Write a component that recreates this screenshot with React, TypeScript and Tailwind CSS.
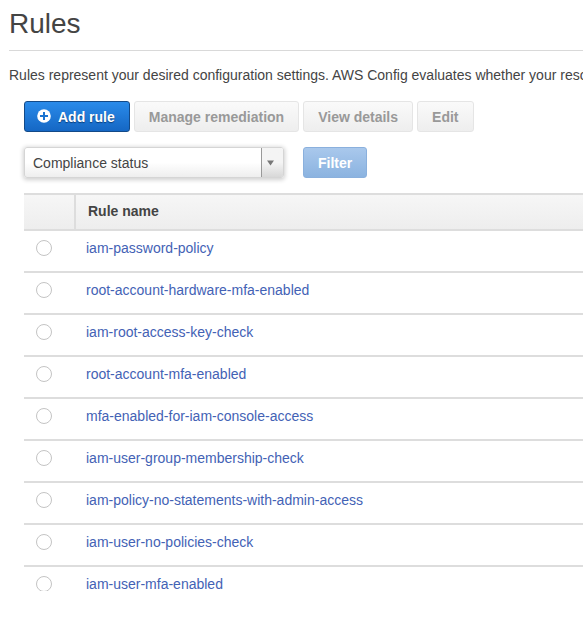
import React from "react";
import clsx from "clsx";

const rules = [
  "iam-password-policy",
  "root-account-hardware-mfa-enabled",
  "iam-root-access-key-check",
  "root-account-mfa-enabled",
  "mfa-enabled-for-iam-console-access",
  "iam-user-group-membership-check",
  "iam-policy-no-statements-with-admin-access",
  "iam-user-no-policies-check",
  "iam-user-mfa-enabled",
];

type ToolbarButtonProps = {
  children: React.ReactNode;
  variant?: "primary" | "default" | "filter";
};

function ToolbarButton({ children, variant = "default" }: ToolbarButtonProps) {
  return (
    <button
      type="button"
      disabled={variant !== "primary"}
      className={clsx(
        "flex h-[31px] shrink-0 items-center rounded-[3px] border text-sm font-bold whitespace-nowrap",
        variant === "primary" &&
          "border-[#134a88] bg-linear-to-b from-[#2a8bea] to-[#1567c4] pr-3.5 pl-3 text-white [text-shadow:0_1px_1px_#0b3d78]",
        variant === "default" &&
          "border-[#e5e5e5] bg-linear-to-b from-[#fafafa] to-[#eeeeee] px-3.5 text-[#999999]",
        variant === "filter" &&
          "border-[#8ab0dd] bg-linear-to-b from-[#a9c8ec] to-[#8bb3e0] px-3.5 text-white"
      )}
    >
      {children}
    </button>
  );
}

function PlusCircle() {
  return (
    <svg viewBox="0 0 14 14" className="mr-[7px] mb-0.5 size-3.5" aria-hidden="true">
      <circle cx="7" cy="7" r="6.8" fill="#fff" />
      <path d="M7 3v8M3 7h8" stroke="#1b74d1" strokeWidth="2" />
    </svg>
  );
}

export default function App() {
  return (
    <main className="overflow-hidden bg-white pl-[9px] font-['Liberation_Sans',Arial,sans-serif] text-sm text-[#444444]">
      <h1 className="border-b border-[#d9d9d9] pt-1.5 pb-2 text-[28px] leading-9">Rules</h1>
      <p className="mt-3.5 whitespace-nowrap">
        Rules represent your desired configuration settings. AWS Config evaluates whether your
        resource configurations comply with relevant rules.
      </p>

      <div className="pl-[15px]">
        {/* Actions */}
        <div className="mt-4 flex gap-1">
          <ToolbarButton variant="primary">
            <PlusCircle />
            Add rule
          </ToolbarButton>
          <ToolbarButton>Manage remediation</ToolbarButton>
          <ToolbarButton>View details</ToolbarButton>
          <ToolbarButton>Edit</ToolbarButton>
        </div>

        {/* Filter bar */}
        <div className="mt-[15px] flex gap-[19px]">
          <div className="relative w-[260px] shrink-0">
            <select
              aria-label="Filter by"
              className="h-[31px] w-full appearance-none rounded-[3px] border border-[#d5d5d5] bg-linear-to-b from-white from-50% to-[#eeeeee] pl-2 text-[#444444] shadow-[0_1px_4px_1px_#d0d0d0]"
            >
              <option>Compliance status</option>
            </select>
            <span className="pointer-events-none absolute inset-y-px right-px flex w-[22px] items-center rounded-r-[2px] border-l border-[#999999] bg-linear-to-b from-[#f4f4f4] from-50% to-[#d8d8d8] pl-[5px]">
              <svg viewBox="0 0 7 6" className="h-1.5 w-[7px]" aria-hidden="true">
                <path d="M0 .5h7L3.5 5.5z" fill="#777" />
              </svg>
            </span>
          </div>
          <ToolbarButton variant="filter">Filter</ToolbarButton>
        </div>

        {/* Rules list */}
        <div className="mt-[15px] h-[398px] overflow-hidden">
          <table className="w-full border-separate border-spacing-0 text-left">
            <thead>
              <tr className="bg-linear-to-b from-[#f7f7f7] to-[#ededed]">
                <td className="w-[52px] border-y-2 border-r-2 border-[#dddddd]" />
                <th className="border-y-2 border-[#dddddd] pt-1.5 pb-2 pl-3 font-bold">
                  Rule name
                </th>
              </tr>
            </thead>
            <tbody>
              {rules.map((rule) => (
                <tr key={rule}>
                  <td className="border-b-2 border-[#dddddd] pt-[9px] pb-[15px] pl-3 align-top">
                    <input
                      type="radio"
                      name="rule"
                      aria-label={rule}
                      className="block size-4 appearance-none rounded-full border border-[#c4c4c4] bg-white checked:border-4 checked:border-[#1567c4]"
                    />
                  </td>
                  <td className="border-b-2 border-[#dddddd] pt-[7px] pb-[13px] pl-2.5 align-top">
                    <a href="#" className="text-[#4362b5] hover:underline">
                      {rule}
                    </a>
                  </td>
                </tr>
              ))}
            </tbody>
          </table>
        </div>
      </div>
    </main>
  );
}
